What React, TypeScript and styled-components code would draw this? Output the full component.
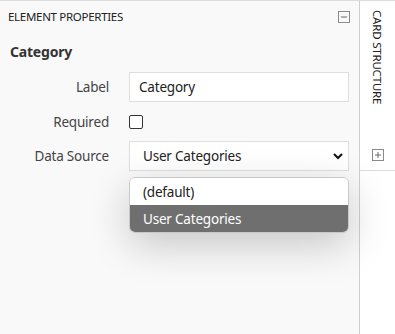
import React from 'react';
import styled, { createGlobalStyle } from 'styled-components';

const GlobalStyle = createGlobalStyle`
  html, body { margin: 0; padding: 0; }
  body {
    font-family: "Noto Sans", "Open Sans", sans-serif;
    background: #ffffff;
    color: #333;
  }
`;

const Shell = styled.div`
  display: flex;
  height: 334px;
  width: 395px;
  overflow: hidden;
  border-top: 1px solid #dcdcdc;
  box-sizing: border-box;
`;

const PropertiesPanel = styled.div`
  flex: 1;
  background: #f9f9f9;
  display: flex;
  flex-direction: column;
`;

const PanelHeader = styled.div`
  height: 31px;
  display: flex;
  align-items: center;
  justify-content: space-between;
  padding: 0 9px 0 8px;
  font-size: 11.5px;
  color: #222;
  letter-spacing: -0.3px;
`;

const SectionTitle = styled.div`
  padding: 10px 10px 0 10px;
  height: 30px;
  font-size: 14px;
  font-weight: 700;
  color: #333;
  letter-spacing: -0.2px;
`;

const Form = styled.div`
  display: flex;
  flex-direction: column;
  gap: 5px;
  padding-right: 10px;
`;

const Row = styled.div<{ $h?: number }>`
  display: grid;
  grid-template-columns: 109px 1fr;
  column-gap: 20px;
  align-items: center;
  height: ${p => p.$h ?? 30}px;
  position: relative;
`;

const FieldLabel = styled.label`
  text-align: right;
  font-size: 13.5px;
  letter-spacing: -0.2px;
  color: #444;
`;

const TextBox = styled.div`
  height: 30px;
  box-sizing: border-box;
  border: 1px solid #dedede;
  background: #fff;
  display: flex;
  align-items: center;
  padding-left: 9px;
  font-size: 13.5px;
  letter-spacing: -0.2px;
  color: #222;
`;

const Check = styled.div`
  width: 12px;
  height: 12px;
  border: 1px solid #333;
  border-radius: 2px;
  background: #fff;
`;

const Select = styled(TextBox)`
  justify-content: space-between;
  padding: 0 4px 0 13px;
`;

const Menu = styled.div`
  position: absolute;
  top: 36px;
  left: 129px;
  right: 0;
  background: #fff;
  border: 1px solid #c9c9c9;
  border-radius: 6px;
  overflow: hidden;
  box-shadow: 0 12px 40px rgba(0, 0, 0, 0.2);
  z-index: 5;
`;

const Option = styled.div<{ $selected?: boolean }>`
  height: 27px;
  display: flex;
  align-items: center;
  padding-left: 13px;
  font-size: 13.5px;
  letter-spacing: -0.2px;
  background: ${p => (p.$selected ? '#6f6f6f' : '#fff')};
  color: ${p => (p.$selected ? '#fff' : '#222')};
`;

const SidePanel = styled.div`
  width: 36px;
  box-sizing: border-box;
  background: #fff;
  border-left: 1px solid #cfcfcf;
`;

const SideTab = styled.div`
  height: 170px;
  border-bottom: 1px solid #dcdcdc;
  display: flex;
  flex-direction: column;
  align-items: center;
  justify-content: space-between;
  padding: 9px 0 9px 0;
  box-sizing: border-box;
`;

const VerticalText = styled.div`
  writing-mode: vertical-rl;
  font-size: 11.5px;
  color: #222;
  letter-spacing: -0.2px;
`;

function SquareIcon({ plus }: { plus?: boolean }) {
  return (
    <svg width="12" height="12" viewBox="0 0 12 12">
      <rect x="0.5" y="0.5" width="11" height="11" fill="none" stroke="#8a8a8a" />
      <line x1="3" y1="6" x2="9" y2="6" stroke="#6a6a6a" />
      {plus && <line x1="6" y1="3" x2="6" y2="9" stroke="#6a6a6a" />}
    </svg>
  );
}

export default function App() {
  return (
    <>
      <GlobalStyle />
      <Shell>
        <PropertiesPanel>
          <PanelHeader>
            <span>ELEMENT PROPERTIES</span>
            <SquareIcon />
          </PanelHeader>
          <SectionTitle>Category</SectionTitle>
          <Form>
            <Row>
              <FieldLabel>Label</FieldLabel>
              <TextBox>Category</TextBox>
            </Row>
            <Row $h={29}>
              <FieldLabel>Required</FieldLabel>
              <Check />
            </Row>
            <Row>
              <FieldLabel>Data Source</FieldLabel>
              <Select>
                <span>User Categories</span>
                <svg width="12" height="12" viewBox="0 0 12 12">
                  <path d="M2 4 L6 8 L10 4" fill="none" stroke="#111" strokeWidth="2" />
                </svg>
              </Select>
              <Menu>
                <Option>(default)</Option>
                <Option $selected>User Categories</Option>
              </Menu>
            </Row>
          </Form>
        </PropertiesPanel>
        <SidePanel>
          <SideTab>
            <VerticalText>CARD STRUCTURE</VerticalText>
            <SquareIcon plus />
          </SideTab>
        </SidePanel>
      </Shell>
    </>
  );
}
